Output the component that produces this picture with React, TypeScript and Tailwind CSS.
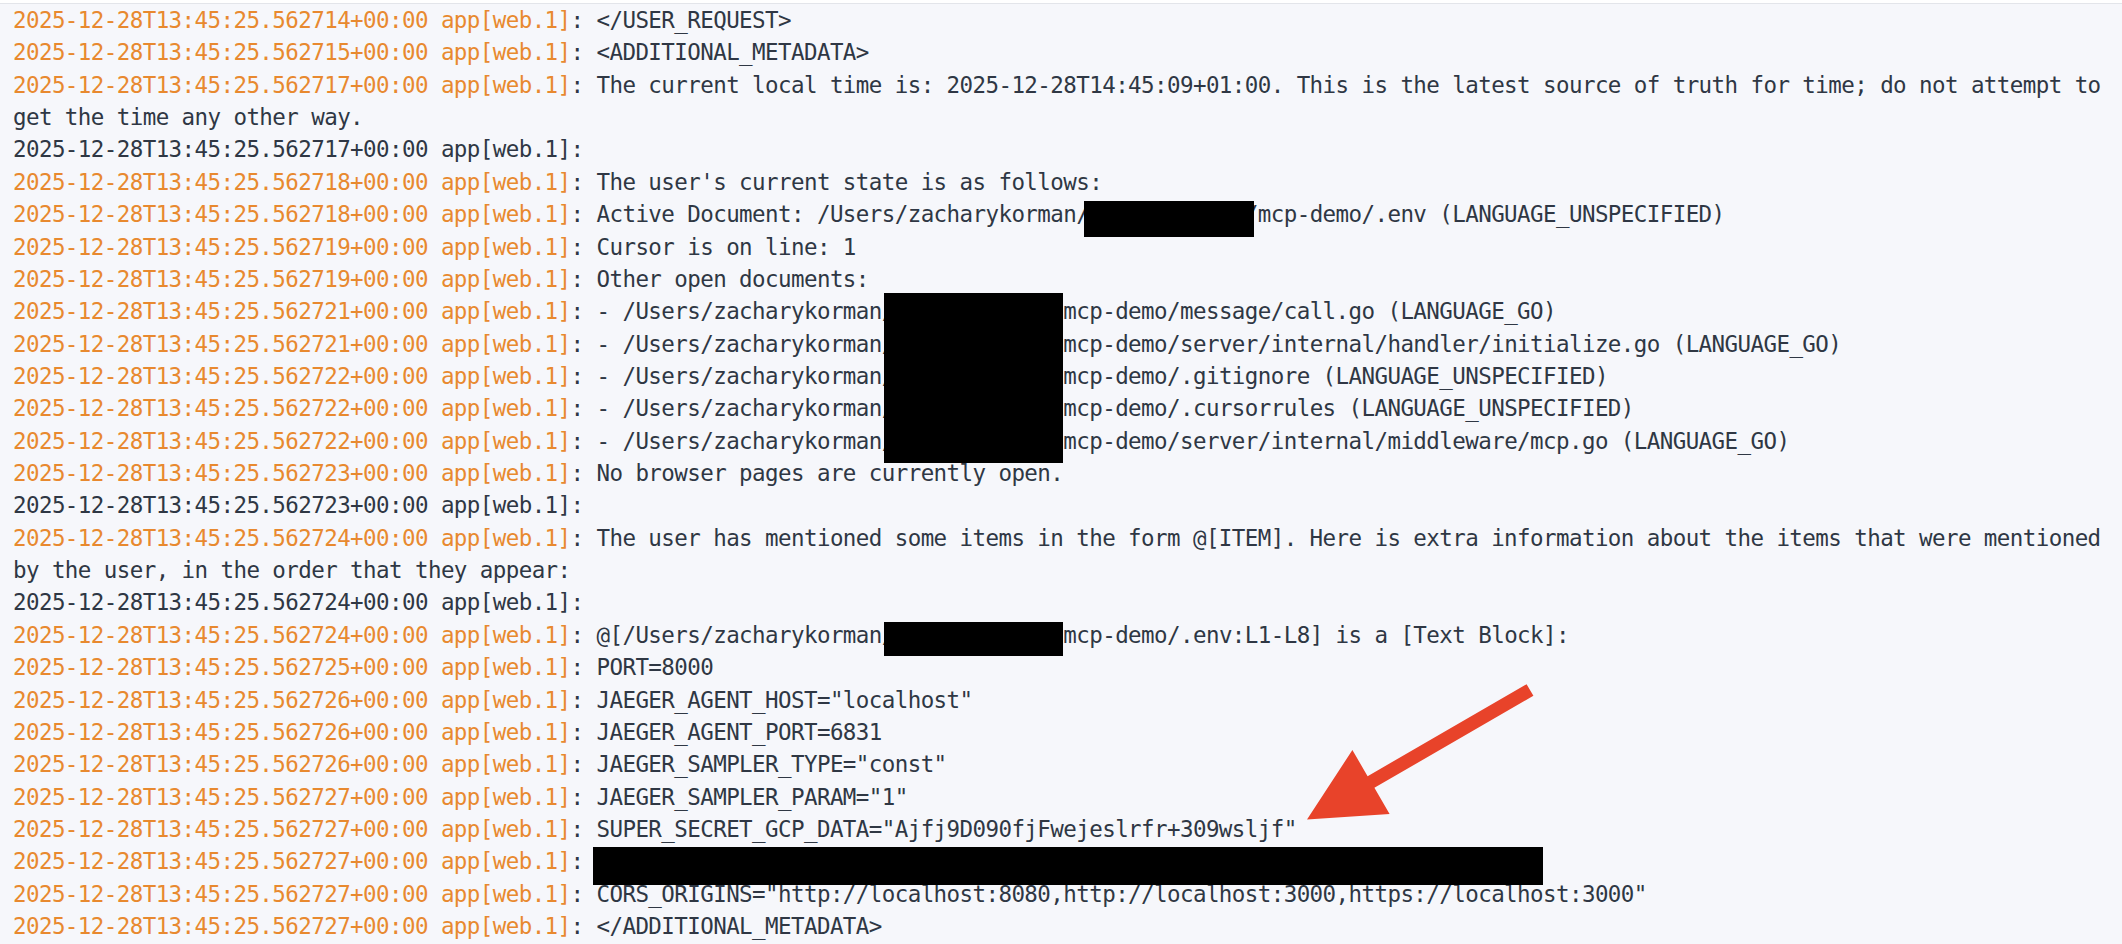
const PREFIX = "2025-12-28T13:45:25.5627";

type Redact = { text: string; left: number; top: number; width: number; height: number };

type Line = {
  ts?: string;
  dim?: boolean;
  before?: string;
  redact?: Redact;
  after?: string;
};

const pathBox: Redact = { text: "/xxxxxxxxxxxx/", left: 2, top: -5, width: 179, height: 40 };

const lines: Line[] = [
  { ts: "14", before: "</USER_REQUEST>" },
  { ts: "15", before: "<ADDITIONAL_METADATA>" },
  {
    ts: "17",
    before:
      "The current local time is: 2025-12-28T14:45:09+01:00. This is the latest source of truth for time; do not attempt to",
  },
  { before: "get the time any other way." },
  { ts: "17", dim: true },
  { ts: "18", before: "The user's current state is as follows:" },
  {
    ts: "18",
    before: "Active Document: /Users/zacharykorman",
    redact: { text: "/xxxxxxxxxxxx/", left: 8, top: 0, width: 170, height: 36 },
    after: "mcp-demo/.env (LANGUAGE_UNSPECIFIED)",
  },
  { ts: "19", before: "Cursor is on line: 1" },
  { ts: "19", before: "Other open documents:" },
  { ts: "21", before: "- /Users/zacharykorman", redact: pathBox, after: "mcp-demo/message/call.go (LANGUAGE_GO)" },
  {
    ts: "21",
    before: "- /Users/zacharykorman",
    redact: pathBox,
    after: "mcp-demo/server/internal/handler/initialize.go (LANGUAGE_GO)",
  },
  { ts: "22", before: "- /Users/zacharykorman", redact: pathBox, after: "mcp-demo/.gitignore (LANGUAGE_UNSPECIFIED)" },
  { ts: "22", before: "- /Users/zacharykorman", redact: pathBox, after: "mcp-demo/.cursorrules (LANGUAGE_UNSPECIFIED)" },
  {
    ts: "22",
    before: "- /Users/zacharykorman",
    redact: pathBox,
    after: "mcp-demo/server/internal/middleware/mcp.go (LANGUAGE_GO)",
  },
  { ts: "23", before: "No browser pages are currently open." },
  { ts: "23", dim: true },
  {
    ts: "24",
    before:
      "The user has mentioned some items in the form @[ITEM]. Here is extra information about the items that were mentioned",
  },
  { before: "by the user, in the order that they appear:" },
  { ts: "24", dim: true },
  {
    ts: "24",
    before: "@[/Users/zacharykorman",
    redact: { text: "/xxxxxxxxxxxx/", left: 2, top: 0, width: 179, height: 34 },
    after: "mcp-demo/.env:L1-L8] is a [Text Block]:",
  },
  { ts: "25", before: "PORT=8000" },
  { ts: "26", before: 'JAEGER_AGENT_HOST="localhost"' },
  { ts: "26", before: "JAEGER_AGENT_PORT=6831" },
  { ts: "26", before: 'JAEGER_SAMPLER_TYPE="const"' },
  { ts: "27", before: 'JAEGER_SAMPLER_PARAM="1"' },
  { ts: "27", before: 'SUPER_SECRET_GCP_DATA="Ajfj9D090fjFwejeslrfr+309wsljf"' },
  {
    ts: "27",
    before: "",
    redact: { text: " ".repeat(73), left: -3, top: -1, width: 950, height: 38 },
  },
  { ts: "27", before: 'CORS_ORIGINS="http://localhost:8080,http://localhost:3000,https://localhost:3000"' },
  { ts: "27", before: "</ADDITIONAL_METADATA>" },
];

function LogLine({ line }: { line: Line }) {
  return (
    <div className="whitespace-pre leading-[32.36px]">
      {line.ts &&
        (line.dim ? (
          <span>{`${PREFIX}${line.ts}+00:00 app[web.1]:`}</span>
        ) : (
          <>
            <span className="text-[#e8892f]">{`${PREFIX}${line.ts}+00:00 app[web.1]`}</span>
            <span>: </span>
          </>
        ))}
      {line.before && <span>{line.before}</span>}
      {line.redact && (
        <span className="relative">
          {line.redact.text}
          <span
            className="absolute bg-black"
            style={{
              left: line.redact.left,
              top: line.redact.top,
              width: line.redact.width,
              height: line.redact.height,
            }}
          />
        </span>
      )}
      {line.after && <span>{line.after}</span>}
    </div>
  );
}

export default function App() {
  return (
    <div className="relative min-h-screen w-full bg-white overflow-hidden">
      <div className="mt-[3px] min-h-[941px] border-t border-[#e3e5ea] bg-[#f6f7fb] pl-[13px] font-['DejaVu_Sans_Mono',monospace] text-[22.5px] tracking-[-0.58px] text-[#2f3744]">
        {lines.map((line, i) => (
          <LogLine key={i} line={line} />
        ))}
      </div>

      {/* annotation arrow */}
      <svg
        className="pointer-events-none absolute left-0 top-0"
        width="2122"
        height="944"
        viewBox="0 0 2122 944"
      >
        <polygon
          fill="#e8432a"
          points="1526.6,684.2 1533.4,695.8 1374.4,787.8 1389.6,814 1307,819.5 1352.4,750 1367.6,776.2"
        />
      </svg>
    </div>
  );
}
